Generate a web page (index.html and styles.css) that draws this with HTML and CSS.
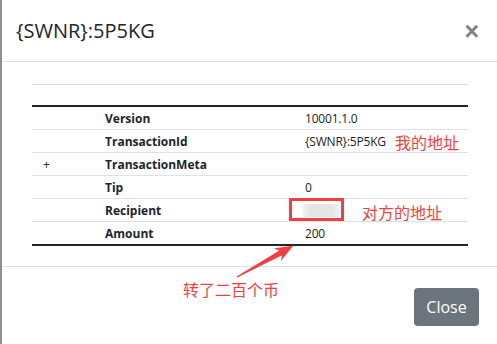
FILE: index.html
```html
<!DOCTYPE html>
<html>
<head>
<meta charset="utf-8">
<link rel="stylesheet" href="styles.css">
</head>
<body>
<div class="modal">
  <div class="modal-header">
    <h5 class="modal-title">{SWNR}:5P5KG</h5>
    <span class="close">&times;</span>
  </div>
  <div class="modal-body">
    <div class="tbl">
      <div class="thead"></div>
      <div class="row"><span class="c1"></span><span class="c2">Version</span><span class="c3">10001.1.0</span></div>
      <div class="row"><span class="c1"></span><span class="c2">TransactionId</span><span class="c3">{SWNR}:5P5KG</span></div>
      <div class="row"><span class="c1">+</span><span class="c2">TransactionMeta</span><span class="c3"></span></div>
      <div class="row"><span class="c1"></span><span class="c2">Tip</span><span class="c3">0</span></div>
      <div class="row"><span class="c1"></span><span class="c2">Recipient</span><span class="c3"><span class="blur"></span></span></div>
      <div class="row last"><span class="c1"></span><span class="c2">Amount</span><span class="c3">200</span></div>
    </div>
  </div>
  <div class="modal-footer">
    <button class="btn">Close</button>
  </div>

  <div class="note note-mine">我的地址</div>
  <div class="note note-other">对方的地址</div>
  <div class="note note-amount">转了二百个币</div>
  <div class="mark"></div>
  <svg class="arrow" width="497" height="344" viewBox="0 0 497 344">
    <polygon points="237.2,277.6 282,255.2 280.8,261 293.5,245.5 273.6,248.4 279.4,250.4 236.6,276.4" fill="#f33f3f"/>
  </svg>
</div>
</body>
</html>
```

FILE: styles.css
```css
* { box-sizing: border-box; }
html, body { margin: 0; padding: 0; background: #fff; }
body {
  font-family: "Open Sans", "Noto Sans", "Noto Sans CJK SC", sans-serif;
  color: #212529;
  width: 497px;
  height: 344px;
  overflow: hidden;
}
.modal {
  position: relative;
  height: 344px;
  border-left: 2px solid #8f8f8f;
  background: #fff;
}
.modal-header {
  height: 62px;
  border-bottom: 1px solid #dee2e6;
  display: flex;
  align-items: center;
  justify-content: space-between;
  padding: 0 18px 0 14px;
}
.modal-title {
  margin: 0;
  font-size: 20px;
  font-weight: 400;
  line-height: 24px;
  color: #212529;
}
.close {
  font-size: 25px;
  font-weight: 700;
  color: #808080;
  line-height: 24px;
  font-family: "Liberation Sans", sans-serif;
}
.modal-body {
  padding: 22px 0 20px 30px;
}
.tbl {
  width: 436px;
  font-size: 12px;
}
.thead {
  height: 23px;
  border-top: 1px solid #dee2e6;
  border-bottom: 2px solid #212529;
}
.row {
  display: flex;
  align-items: center;
  height: 23px;
  border-bottom: 1px solid #dee2e6;
}
.row.last { border-bottom: 2px solid #212529; height: 24px; }
.c1 { width: 73px; padding-left: 11px; }
.c2 { width: 200px; font-weight: 700; }
.c3 { flex: 1; display: flex; align-items: center; letter-spacing: -0.2px; }
.blur {
  display: inline-block;
  width: 37px;
  height: 13px;
  margin-left: -2px;
  margin-top: 1px;
  background: linear-gradient(90deg, #f2f2f2 0%, #e4e4e4 20%, #e6e6e6 80%, #f3f3f3 100%);
}
.modal-footer {
  border-top: 1px solid #dee2e6;
  display: flex;
  justify-content: flex-end;
  padding: 21px 18px 0 0;
}
.btn {
  width: 65px;
  height: 38px;
  border: 0;
  border-radius: 4px;
  background: #6c757d;
  color: #fff;
  font-family: "Open Sans", sans-serif;
  font-size: 16px;
  padding: 0;
}
.note {
  position: absolute;
  color: #f33f3f;
  font-size: 16px;
  line-height: 16px;
  font-family: "Noto Sans CJK SC", sans-serif;
  white-space: nowrap;
}
.note-mine { left: 393px; top: 134px; }
.note-other { left: 360px; top: 204px; }
.note-amount { left: 181px; top: 281px; }
.mark {
  position: absolute;
  left: 287px;
  top: 198px;
  width: 55px;
  height: 23px;
  border: 3px solid #f33f3f;
}
.arrow {
  position: absolute;
  left: -2px;
  top: 0;
  pointer-events: none;
}
```
